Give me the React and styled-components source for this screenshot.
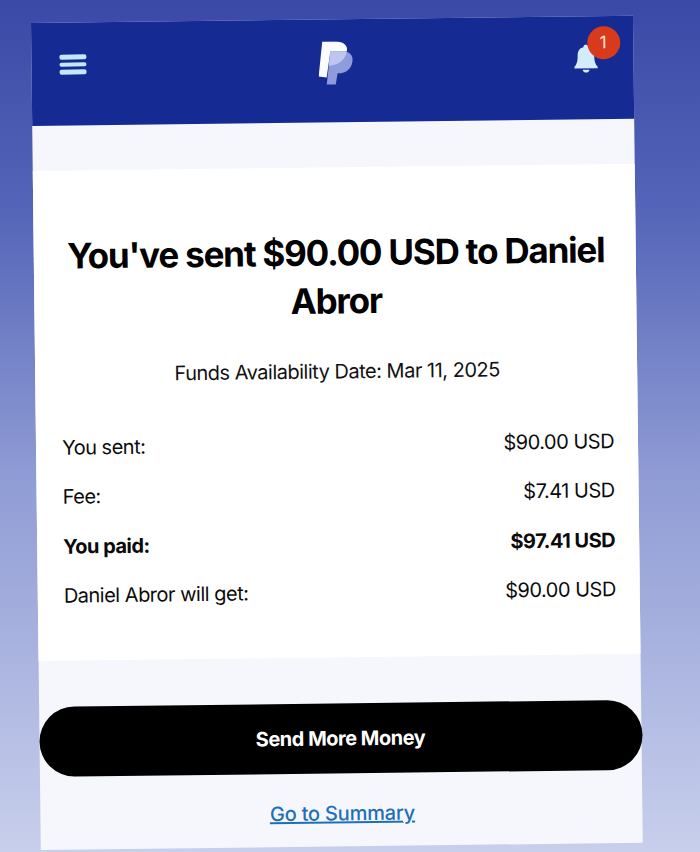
import styled, { createGlobalStyle } from "styled-components";

const GlobalStyle = createGlobalStyle`
  html, body {
    margin: 0;
    height: 852px;
    overflow: hidden;
  }

  body {
    font-family: "Inter", "Liberation Sans", sans-serif;
    background: linear-gradient(180deg, #3a49a6 0%, #5565b8 25%, #8e9ad4 55%, #c8cfec 100%);
  }
`;

const Screen = styled.div`
  width: 602px;
  height: 827px;
  margin: 23px 0 0 31px;
  background: #f5f7fd;
  transform: rotate(-0.68deg);
  transform-origin: top left;
`;

const Header = styled.header`
  height: 103px;
  padding: 0 35px 19px 28px;
  box-sizing: border-box;
  background: #152a92;
  display: flex;
  align-items: center;
  justify-content: space-between;
`;

const MenuButton = styled.div`
  width: 27px;
  display: flex;
  flex-direction: column;
  gap: 3px;
`;

const MenuBar = styled.span`
  height: 4.5px;
  border-radius: 2px;
  background: #c6e6fb;
`;

const LogoMark = styled.svg`
  margin: 4px 0 0 11px;
`;

const BellWrap = styled.div`
  position: relative;
  width: 25px;
  height: 29px;
`;

const Badge = styled.span`
  position: absolute;
  top: -18px;
  left: 13.5px;
  width: 33px;
  height: 33px;
  border-radius: 50%;
  background: #d93a1c;
  color: #fbe9df;
  font-size: 17px;
  display: flex;
  align-items: center;
  justify-content: center;
`;

const Card = styled.section`
  margin-top: 45px;
  height: 490px;
  padding: 60.5px 24px 0 26px;
  box-sizing: border-box;
  background: #fff;
`;

const Title = styled.h1`
  margin: 0;
  font-size: 35px;
  line-height: 48px;
  font-weight: 700;
  letter-spacing: -1.2px;
  text-align: center;
  color: #000;
`;

const Availability = styled.p`
  margin: 33px 0 45px;
  font-size: 20px;
  line-height: 28px;
  letter-spacing: -0.5px;
  text-align: center;
  color: #111;
`;

const Rows = styled.div`
  display: flex;
  flex-direction: column;
  gap: 21.5px;
`;

const Row = styled.div`
  display: flex;
  justify-content: space-between;
  font-size: 20px;
  line-height: 28px;
  letter-spacing: -0.5px;
  font-weight: ${(p) => (p.$bold ? 700 : 400)};
  color: #0b0b0b;
`;

const Actions = styled.div`
  padding-top: 46px;
  display: flex;
  flex-direction: column;
  align-items: center;
`;

const SendButton = styled.button`
  width: 603px;
  height: 70px;
  border: 0;
  border-radius: 35px;
  background: #000;
  color: #fff;
  font-family: inherit;
  font-size: 20px;
  font-weight: 700;
  letter-spacing: -0.5px;
`;

const SummaryLink = styled.a`
  margin: 26px 0 0 2px;
  font-size: 20px;
  line-height: 28px;
  letter-spacing: -0.2px;
  font-weight: 500;
  color: #1f6fb8;
  text-decoration: underline;
`;

function Logo() {
  return (
    <LogoMark width="35" height="44" viewBox="0 0 35 44">
      <path
        d="M12 10h12c7 0 11 4 10 10-1 8-7 12-14 12h-1l-2 11H8z"
        fill="#8e9cdb"
      />
      <path
        d="M4 0h13c8 0 13 4 11.500 10H12L8 36l-8-1z"
        fill="#fbfcff"
      />
      <path
        d="M12 10h16.500C27 18 21 23 13 24h-2.700z"
        fill="#bcc6ee"
      />
    </LogoMark>
  );
}

function Bell() {
  return (
    <svg width="25" height="29" viewBox="0 0 30 35" style={{ display: "block" }}>
      <path
        d="M15 0c-2 0-3 2-3 3.500-5 1-7 5-7 10.500 0 6-1 10-4 13v2h28v-2c-3-3-4-7-4-13 0-5.500-2-9.500-7-10.500 0-1.500-1-3.500-3-3.500z"
        fill="#d2ecfb"
      />
      <path d="M11 30.500h8c0 2-2 3.500-4 3.500s-4-1.500-4-3.500z" fill="#d2ecfb" />
    </svg>
  );
}

const rows = [
  { label: "You sent:", value: "$90.00 USD" },
  { label: "Fee:", value: "$7.41 USD" },
  { label: "You paid:", value: "$97.41 USD", bold: true },
  { label: "Daniel Abror will get:", value: "$90.00 USD" },
];

export default function App() {
  return (
    <>
      <GlobalStyle />
      <Screen>
        <Header>
          <MenuButton>
            <MenuBar />
            <MenuBar />
            <MenuBar />
          </MenuButton>
          <Logo />
          <BellWrap>
            <Bell />
            <Badge>1</Badge>
          </BellWrap>
        </Header>
        <Card>
          <Title>You've sent $90.00 USD to Daniel Abror</Title>
          <Availability>Funds Availability Date: Mar 11, 2025</Availability>
          <Rows>
            {rows.map((row) => (
              <Row key={row.label} $bold={row.bold}>
                <span>{row.label}</span>
                <span>{row.value}</span>
              </Row>
            ))}
          </Rows>
        </Card>
        <Actions>
          <SendButton>Send More Money</SendButton>
          <SummaryLink href="#">Go to Summary</SummaryLink>
        </Actions>
      </Screen>
    </>
  );
}
